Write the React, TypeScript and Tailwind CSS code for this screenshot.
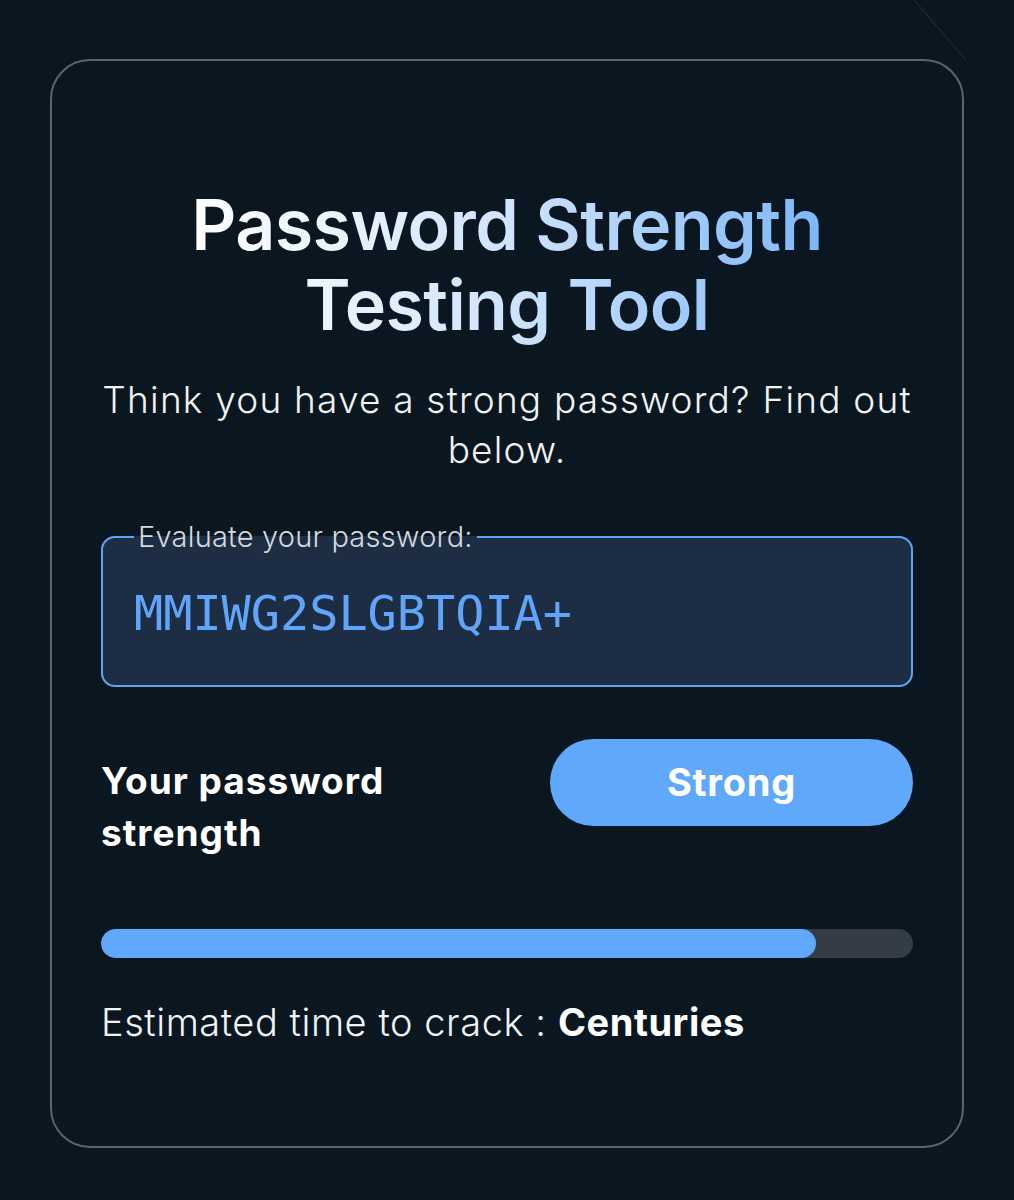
export default function App() {
  const strength = 88;

  return (
    <div className="relative min-h-[1200px] overflow-hidden bg-[#0c161e] px-[50px] pt-[59px] pb-[52px] font-['Inter','Noto_Sans',sans-serif]">
      {/* faint background streak */}
      <svg className="pointer-events-none absolute right-0 top-0 h-[80px] w-[120px]" viewBox="0 0 120 80">
        <line x1="20" y1="0" x2="72" y2="60" stroke="#23323f" strokeWidth="1" />
      </svg>

      <div className="relative h-[1089px] rounded-[40px] border-2 border-[#5b636b] bg-[#0b1720] px-[49px] pt-[124px]">
        {/* Heading */}
        <h1 className="mx-auto w-fit bg-gradient-to-r from-white via-[#cfe4fd] to-[#7db7f8] bg-clip-text text-center text-[70px] font-semibold leading-[80px] tracking-[-0.6px] text-transparent">
          Password Strength
          <br />
          Testing Tool
        </h1>

        <p className="mt-[30px] text-center text-[37px] font-light leading-[50px] tracking-[1.2px] text-[#f1f3f5]">
          Think you have a strong password? Find out below.
        </p>

        {/* Password input */}
        <fieldset className="mt-[47px] h-[165px] rounded-[14px] border-2 border-[#5fa4f4] bg-[#1d2e44] px-[31px]">
          <legend className="px-[4px] text-[29px] font-light leading-[30px] tracking-[0.2px] text-[#d3d9df]">
            Evaluate your password:
          </legend>
          <input
            type="text"
            defaultValue="MMIWG2SLGBTQIA+"
            className="mt-[33px] w-full bg-transparent font-['DejaVu_Sans_Mono',monospace] text-[48.5px] leading-[56px] text-[#60a5fa] outline-none"
          />
        </fieldset>

        {/* Strength label + pill */}
        <div className="mt-[52px] flex items-start justify-between">
          <div className="w-[340px] pt-[16px] text-[37px] font-bold leading-[52px] tracking-[1px] text-white">
            Your password strength
          </div>
          <div className="flex h-[87px] w-[363px] items-center justify-center rounded-full bg-[#60a8fb] text-[38px] font-bold tracking-[0.8px] text-white">
            Strong
          </div>
        </div>

        {/* Progress bar */}
        <div className="mt-[70px] h-[29px] w-full overflow-hidden rounded-full bg-[#333c47]">
          <div className="h-full rounded-full bg-[#60a8fb]" style={{ width: `${strength}%` }} />
        </div>

        <p className="mt-[39px] text-[38px] font-light leading-[50px] tracking-[0.55px] text-[#f1f3f5]">
          Estimated time to crack : <span className="font-bold text-white">Centuries</span>
        </p>
      </div>
    </div>
  );
}
